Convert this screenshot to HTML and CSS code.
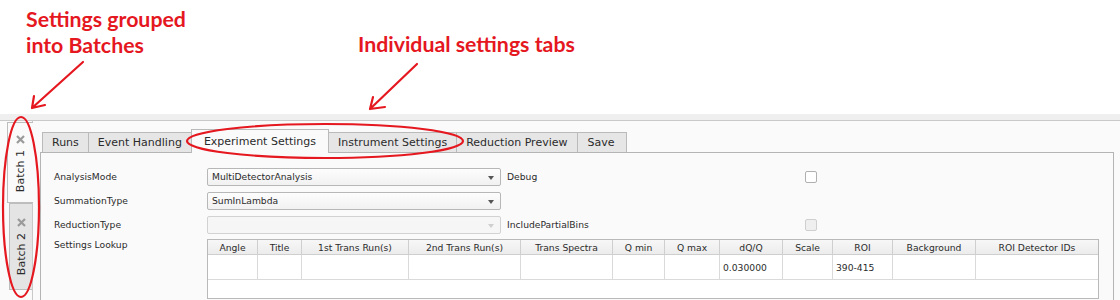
FILE: index.html
```html
<!DOCTYPE html>
<html lang="en">
<head>
    <meta charset="UTF-8">
    <title>Reflectometry GUI - Batches</title>
    <link rel="stylesheet" href="styles.css">
</head>
<body>
    <header class="notes">
        <p class="note note-batches">Settings grouped<br>into Batches</p>
        <p class="note note-tabs">Individual settings tabs</p>
    </header>

    <!-- red callout marks drawn over the screenshot -->
    <svg class="marks" width="1120" height="300" viewBox="0 0 1120 300">
        <ellipse cx="21" cy="207" rx="18" ry="90"/>
        <ellipse cx="325" cy="141" rx="138" ry="17"/>
        <path d="M83 62 L32 108 M32 108 L45 105 M32 108 L34 96"/>
        <path d="M417 64 L370 109 M370 109 L385 107 M370 109 L373 97"/>
    </svg>

    <main class="window">
        <nav class="batch-bar">
            <div class="batch-tab active">
                <svg class="close" width="9" height="9" viewBox="0 0 9 9"><path d="M1 1 L8 8 M8 1 L1 8"/></svg>
                <span>Batch 1</span>
            </div>
            <div class="batch-tab">
                <svg class="close" width="9" height="9" viewBox="0 0 9 9"><path d="M1 1 L8 8 M8 1 L1 8"/></svg>
                <span>Batch 2</span>
            </div>
        </nav>

        <section class="batch-pane">
            <div class="tab-bar">
                <div class="tab first">Runs</div>
                <div class="tab">Event Handling</div>
                <div class="tab active">Experiment Settings</div>
                <div class="tab">Instrument Settings</div>
                <div class="tab">Reduction Preview</div>
                <div class="tab last">Save</div>
            </div>

            <div class="tab-pane">
                <div class="form">
                    <label class="field-label">AnalysisMode</label>
                    <div class="combo">MultiDetectorAnalysis</div>
                    <label class="field-label">Debug</label>
                    <span class="check"></span>

                    <label class="field-label">SummationType</label>
                    <div class="combo">SumInLambda</div>
                    <span></span>
                    <span></span>

                    <label class="field-label">ReductionType</label>
                    <div class="combo disabled"></div>
                    <label class="field-label">IncludePartialBins</label>
                    <span class="check disabled"></span>

                    <label class="field-label top">Settings Lookup</label>
                    <div class="lookup">
                        <table class="lookup-table">
                            <colgroup>
                                <col style="width: 50px">
                                <col style="width: 44px">
                                <col style="width: 107px">
                                <col style="width: 112px">
                                <col style="width: 92px">
                                <col style="width: 52px">
                                <col style="width: 55px">
                                <col style="width: 63px">
                                <col style="width: 50px">
                                <col style="width: 60px">
                                <col style="width: 83px">
                                <col>
                            </colgroup>
                            <thead>
                                <tr>
                                    <th>Angle</th>
                                    <th>Title</th>
                                    <th>1st Trans Run(s)</th>
                                    <th>2nd Trans Run(s)</th>
                                    <th>Trans Spectra</th>
                                    <th>Q min</th>
                                    <th>Q max</th>
                                    <th>dQ/Q</th>
                                    <th>Scale</th>
                                    <th>ROI</th>
                                    <th>Background</th>
                                    <th>ROI Detector IDs</th>
                                </tr>
                            </thead>
                            <tbody>
                                <tr>
                                    <td></td><td></td><td></td><td></td><td></td><td></td><td></td>
                                    <td>0.030000</td>
                                    <td></td>
                                    <td>390-415</td>
                                    <td></td><td></td>
                                </tr>
                            </tbody>
                        </table>
                    </div>
                </div>
            </div>
        </section>
    </main>
</body>
</html>
```

FILE: styles.css
```css
body {
    margin: 0;
    width: 1120px;
    height: 300px;
    overflow: hidden;
    background-color: #fff;
    font-family: "DejaVu Sans", sans-serif;
    color: #2b2b2b;
    position: relative;
}

/* Annotation text */
.notes {
    display: flex;
    height: 114px;
    padding-left: 26px;
    box-sizing: border-box;
}
.note {
    margin: 0;
    font-family: Lato, "Liberation Sans", sans-serif;
    font-weight: bold;
    font-size: 21.3px;
    line-height: 26px;
    color: #e5171f;
}
.note-batches {
    width: 332px;
    margin-top: 6px;
}
.note-tabs {
    margin-top: 31px;
}

.marks {
    position: absolute;
    top: 0;
    left: 0;
    z-index: 5;
    pointer-events: none;
    fill: none;
    stroke: #e5171f;
    stroke-width: 2.2;
    stroke-linecap: round;
}

/* Window */
.window {
    display: flex;
    height: 186px;
    overflow: hidden;
    padding-top: 6px;
    box-sizing: border-box;
    background-color: #efefef;
}

.batch-bar {
    width: 32px;
    flex-shrink: 0;
    display: flex;
    flex-direction: column;
    align-items: flex-end;
    padding-top: 1px;
    background-color: #fafafa;
    border-top: 1px solid #c9c9c9;
}
.batch-tab {
    width: 23px;
    height: 87px;
    display: flex;
    flex-direction: column;
    align-items: center;
    gap: 6px;
    padding-top: 14px;
    box-sizing: border-box;
    background-color: #e4e4e4;
    border: 1px solid #bdbdbd;
    border-right: none;
    font-size: 11px;
    color: #2b2b2b;
}
.batch-tab.active {
    width: 26px;
    height: 81px;
    padding-top: 12px;
    background-color: #fafafa;
    margin-right: -1px;
    position: relative;
    z-index: 1;
}
.batch-tab span {
    writing-mode: vertical-rl;
    transform: rotate(180deg);
    white-space: nowrap;
}
.close {
    fill: none;
    stroke: #9a9a9a;
    stroke-width: 2.2;
}

.batch-pane {
    flex: 1;
    background-color: #fafafa;
    border-top: 1px solid #c9c9c9;
    border-left: 1px solid #c9c9c9;
    padding: 8px 6px 0 7px;
}

/* Inner settings tabs */
.tab-bar {
    display: flex;
    align-items: flex-end;
    height: 23px;
    padding-left: 2px;
}
.tab {
    height: 20px;
    box-sizing: border-box;
    padding: 0 9px;
    display: flex;
    align-items: center;
    font-size: 11px;
    background-color: #e6e6e6;
    border: 1px solid #bababa;
    border-left: none;
    border-bottom: none;
}
.tab.first {
    border-left: 1px solid #bababa;
}
.tab.last {
    padding: 0 11px 0 10px;
}
.tab.active {
    height: 24px;
    padding: 0 12px;
    margin: 0 0 -1px -1px;
    border-left: 1px solid #bababa;
    background-color: #fafafa;
    position: relative;
    z-index: 1;
}

.tab-pane {
    height: 150px;
    box-sizing: border-box;
    background-color: #fafafa;
    border: 1px solid #b4b4b4;
    padding: 14px 0 0 13px;
}

/* Settings form */
.form {
    display: grid;
    grid-template-columns: 147px 294px 292px 12px;
    column-gap: 6px;
    grid-auto-rows: 19px;
    row-gap: 5px;
    align-items: center;
    font-size: 9.2px;
}
.field-label {
    color: #2b2b2b;
}
.field-label.top {
    align-self: start;
}
.combo {
    height: 18px;
    box-sizing: border-box;
    padding: 0 20px 0 4px;
    display: flex;
    align-items: center;
    border: 1px solid #b7b7b7;
    border-radius: 2px;
    background: linear-gradient(#fdfdfd, #f1f1f1);
    position: relative;
}
.combo::after {
    content: "";
    position: absolute;
    right: 6px;
    top: 7px;
    border-left: 3.5px solid transparent;
    border-right: 3.5px solid transparent;
    border-top: 4px solid #555;
}
.combo.disabled {
    border-color: #d2d2d2;
    background: #f6f6f6;
}
.combo.disabled::after {
    border-top-color: #cfcfcf;
}
.check {
    width: 12px;
    height: 12px;
    box-sizing: border-box;
    border: 1px solid #b0b0b0;
    border-radius: 2px;
    background-color: #fff;
}
.check.disabled {
    background-color: #efefef;
    border-color: #cfcfcf;
}

.lookup {
    grid-column: 2 / span 3;
    width: 892px;
    height: 60px;
    box-sizing: border-box;
    border: 1px solid #b9b9b9;
    background-color: #fff;
    align-self: start;
    overflow: hidden;
}
.lookup-table {
    width: 890px;
    border-collapse: separate;
    border-spacing: 0;
    table-layout: fixed;
    font-size: 9.2px;
}
.lookup-table th {
    height: 14px;
    padding: 0;
    font-weight: normal;
    text-align: center;
    white-space: nowrap;
    overflow: hidden;
    background: linear-gradient(#f7f7f7, #ececec);
    border-right: 1px solid #cfcfcf;
    border-bottom: 1px solid #cfcfcf;
}
.lookup-table td {
    height: 24px;
    padding: 0 3px;
    border-right: 1px solid #dadada;
    border-bottom: 1px solid #dadada;
}
.lookup-table th:last-child,
.lookup-table td:last-child {
    border-right: none;
}
```
